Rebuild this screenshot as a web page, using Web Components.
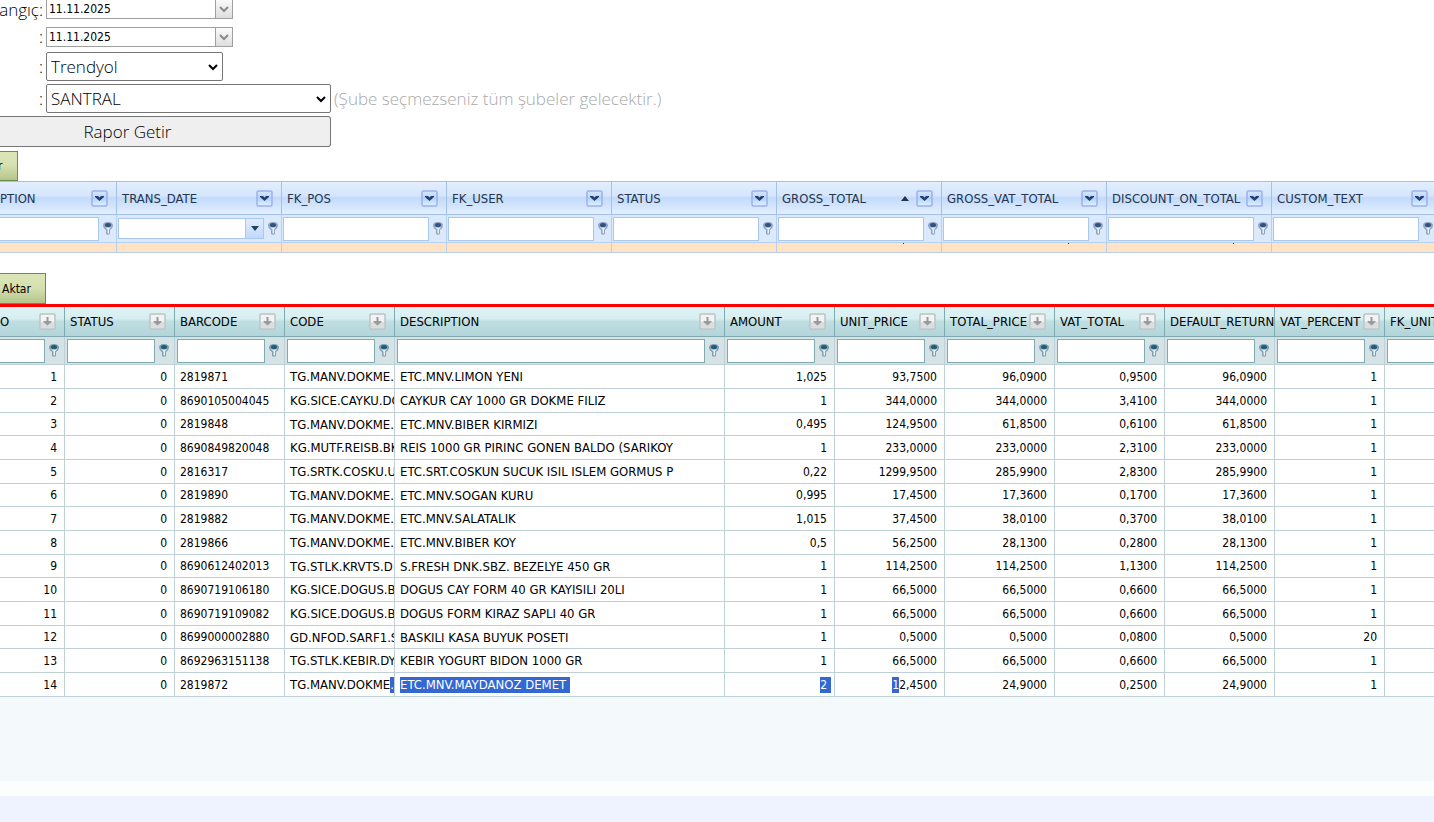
<!DOCTYPE html>
<html lang="tr">
<head>
<meta charset="utf-8">
<title>Rapor</title>
<style>
  body {
    margin: 0;
    background: #fff;
    color: #000;
    font-family: "DejaVu Sans Condensed", "DejaVu Sans", sans-serif;
    font-size: 12px;
    overflow: hidden;
  }
</style>
</head>
<body>
<report-page>
  <report-form slot="form">
    <form-row label="angıç:"><date-box name="Başlangıç" value="11.11.2025" cut></date-box></form-row>
    <form-row label=":"><date-box name="Bitiş" value="11.11.2025"></date-box></form-row>
    <form-row label=":" tall><pick-list name="Kaynak" value="Trendyol"></pick-list></form-row>
    <form-row label=":" tall><pick-list name="Şube" value="SANTRAL" wide></pick-list><span class="hint">(Şube seçmezseniz tüm şubeler gelecektir.)</span></form-row>
  </report-form>
  <export-button slot="export" cut>r</export-button>
  <data-grid slot="orders" id="orders"></data-grid>
  <export-button slot="export-lines">Aktar</export-button>
  <data-grid slot="lines" id="lines" theme="aqua"></data-grid>
</report-page>

<script>
const SVG_CHEVRON = `<svg viewBox="0 0 10 8" width="10" height="8"><path d="M1 2L5 6 9 2" fill="none" stroke="currentColor" stroke-width="2"/></svg>`;
const SVG_KEY = `<svg viewBox="0 0 10 13" width="10" height="13"><path d="M0 3.500Q0 0 5 0T10 3.500Q10 6 7 8V12Q5 13.500 3 12V8Q0 6 0 3.500z" fill="var(--pin)"/><path d="M1.500 4.500Q5 7 8.500 4.500L6 7.500V11.500H4.500V7.500z" fill="#eaf2f7"/><ellipse cx="5" cy="3" rx="3" ry="2" fill="var(--pin-dark)"/></svg>`;
const SVG_MENU_BLUE = `<svg viewBox="0 0 17 17" width="17" height="17"><defs><linearGradient id="b" x2="0" y2="1"><stop offset="0" stop-color="#d8e8fd"/><stop offset=".5" stop-color="#b4d2fb"/><stop offset="1" stop-color="#e0f3ff"/></linearGradient></defs><rect x="1" y="1" width="15" height="15" rx="1.500" fill="url(#b)" stroke="#9db0ea" stroke-width="1.500"/><path d="M4 6H7L8.500 7.500 10 6H13V7L8.500 11 4 7z" fill="#23406e"/></svg>`;
const SVG_MENU_GREY = `<svg viewBox="0 0 17 17" width="17" height="17"><rect x="1" y="1" width="15" height="15" rx="1" fill="#f3f3f3" stroke="#bcc3c5" stroke-width="1.500"/><path d="M2 9H15V15H2z" fill="#dcdddd"/><path d="M7.500 4H9.500V8H12.500V9L8.500 12.500 4.500 9V8H7.500z" fill="#989b9c"/></svg>`;
const SVG_SORT = `<svg viewBox="0 0 8 5" width="8" height="5"><path d="M0 5L4 0 8 5z" fill="#23344f"/></svg>`;
const SVG_DOWN = `<svg viewBox="0 0 8 5" width="8" height="5"><path d="M0 0H8L4 5z" fill="#23405f"/></svg>`;

class BaseElement extends HTMLElement {
  render(html) {
    if (!this.shadowRoot) this.attachShadow({ mode: 'open' });
    this.shadowRoot.innerHTML = html;
  }
}

class ReportPage extends BaseElement {
  connectedCallback() {
    this.render(`
<style>
  :host { display: flex; flex-direction: column; min-height: 100vh; }
  .orders { padding-bottom: 20px; }
  .lines {
    border-top: 3px solid #f00;
    background: #f4f9fc;
    padding-bottom: 84px;
  }
  .foot { flex: 1; border-top: 15px solid #fcfdfd; background: #eef3ff; }
</style>
<slot name="form"></slot>
<slot name="export"></slot>
<div class="orders"><slot name="orders"></slot></div>
<slot name="export-lines"></slot>
<div class="lines"><slot name="lines"></slot></div>
<div class="foot"></div>`);
  }
}

class ReportForm extends BaseElement {
  connectedCallback() {
    this.render(`
<style>
  :host { display: block; padding-bottom: 4px; font-family: "Open Sans", "Noto Sans", sans-serif; font-size: 17px; font-weight: 300; }
  button {
    display: block;
    box-sizing: border-box;
    width: 331px;
    height: 31px;
    padding: 0 75px 0 0;
    border: 1px solid #767676;
    border-left: 0;
    border-radius: 0 3px 3px 0;
    background: #efefef;
    color: #000;
    font: inherit;
  }
</style>
<slot></slot>
<button type="button">Rapor Getir</button>`);
  }
}

class FormRow extends BaseElement {
  connectedCallback() {
    this.render(`
<style>
  :host { display: flex; align-items: center; height: 20px; padding-bottom: 5px; white-space: nowrap; }
  :host(:first-child) { height: 19px; padding-bottom: 8px; }
  :host([tall]) { height: 29px; padding-bottom: 3px; }
  .label { width: 43px; margin-right: 3px; display: flex; justify-content: flex-end; line-height: 20px; }
  ::slotted(.hint) { margin-left: 3px; color: #a9a9a9; }
</style>
<span class="label">${this.getAttribute('label')}</span><slot></slot>`);
  }
}

class DateBox extends BaseElement {
  connectedCallback() {
    this.render(`
<style>
  :host { display: flex; box-sizing: border-box; width: 187px; height: 20px; border: 1px solid #9f9f9f; background: #fff; }
  :host([cut]) { border-top: 0; height: 19px; }
  input {
    flex: 1; min-width: 0; padding: 0 2px; border: 0; outline: 0;
    font-family: "DejaVu Sans Condensed", "DejaVu Sans", sans-serif;
    font-size: 12px;
  }
  button {
    width: 17px; padding: 0; border: 0;
    border-left: 1px solid #9f9f9f;
    background: linear-gradient(to bottom, #fafafa, #dedede);
    color: #8a8a8a; line-height: 0;
  }
</style>
<input type="text" aria-label="${this.getAttribute('name')}" value="${this.getAttribute('value')}">
<button type="button" aria-label="Takvim">${SVG_CHEVRON}</button>`);
  }
}

class PickList extends BaseElement {
  connectedCallback() {
    this.render(`
<style>
  :host { display: grid; align-items: center; width: 177px; height: 29px; }
  :host([wide]) { width: 285px; }
  select, span { grid-area: 1 / 1; }
  select {
    appearance: none; box-sizing: border-box; width: 100%; height: 29px;
    padding: 0 4px; border: 1px solid #767676; border-radius: 2px;
    background: #fff; color: #000; font: inherit;
  }
  span { justify-self: end; margin-right: 5px; line-height: 0; pointer-events: none; }
</style>
<select aria-label="${this.getAttribute('name')}"><option>${this.getAttribute('value')}</option></select>
<span>${SVG_CHEVRON}</span>`);
  }
}

class ExportButton extends BaseElement {
  connectedCallback() {
    this.render(`
<style>
  :host { display: block; }
  button {
    display: block; box-sizing: border-box; width: 46px; height: 31px;
    padding: 0; overflow: hidden;
    border: 1px solid #6d8a4f; border-left: 0;
    background: linear-gradient(to bottom, #dbe7b8, #d3dfae 50%, #b5c48b);
    color: #000; font: inherit; text-align: left; text-indent: 2px;
  }
  :host([cut]) button { width: 18px; height: 30px; text-indent: -2px; }
</style>
<button type="button"><slot></slot></button>`);
  }
}

class DataGrid extends BaseElement {
  set config(cfg) {
    const width = cfg.columns.reduce((sum, c) => sum + c.width, 0);
    const cols = cfg.columns.map(c => `<col style="width:${c.width}px">`).join('');
    const menu = this.getAttribute('theme') === 'aqua' ? SVG_MENU_GREY : SVG_MENU_BLUE;
    const heads = cfg.columns.map(c => `
      <th scope="col"><div class="head">
        <span class="title">${c.title}</span>
        ${c.sorted ? `<span class="sort">${SVG_SORT}</span>` : ''}
        ${c.noMenu ? '' : `<button type="button" aria-label="Filtre">${menu}</button><i></i>`}
      </div></th>`).join('');
    const filters = cfg.columns.map(c => `
      <td><div class="filter">
        <div class="box${c.combo ? ' combo' : ''}"><input type="text" aria-label="${c.title}">${c.combo ? `<button type="button" aria-label="Seç">${SVG_DOWN}</button>` : ''}</div>
        <span class="key">${SVG_KEY}</span>
      </div></td>`).join('');
    const rows = cfg.rows.map(r => `<tr>${r.map((v, i) =>
      `<td class="${cfg.columns[i].align || ''} ${cfg.columns[i].speck ? 'speck' : ''}">${v}</td>`).join('')}</tr>`).join('');

    this.render(`
<style>
  :host {
    display: block; overflow: hidden;
    --line: #a3c0e8; --cell-line: #b8d0ee; --text: #23344f;
    --head: linear-gradient(to bottom, #e3eefe, #d6e6fc 42%, #c2dafa 50%, #d3e5fd 75%, #e2efff);
    --filter: #dbe9fd; --box: #a9c7f0;
    --pin: #8da3c0; --pin-dark: #31517f;
    --head-height: 34px; --filter-height: 28px; --pad: 1px;
  }
  :host([theme="aqua"]) {
    --line: #7fabb0; --cell-line: #bfd1d7; --text: #000;
    --head: linear-gradient(to bottom, #dff3f4, #d7eef0 40%, #bfdee1 50%, #b2d5d9);
    --filter: #d5e3e7; --box: #7fabb0;
    --pin: #7d9eb0; --pin-dark: #235a78;
    --head-height: 30px; --pad: 2px;
  }
  table { border-collapse: separate; border-spacing: 0; table-layout: fixed; }
  th, td {
    box-sizing: border-box; padding: 0; overflow: hidden; white-space: nowrap;
    border-right: 1px solid var(--cell-line); border-bottom: 1px solid var(--cell-line);
  }
  th {
    height: var(--head-height); background: var(--head); color: var(--text);
    border-color: var(--line); font-size: 13px; font-weight: normal; text-align: left;
  }
  :host(:not([theme])) th { border-top: 1px solid var(--line); }
  .head { display: flex; align-items: center; padding-left: 5px; }
  th:first-child .head { padding-left: 0; }
  .title { flex: none; margin-right: auto; }
  .sort { margin-right: 5px; line-height: 0; }
  button { flex: none; padding: 0; border: 0; background: none; line-height: 0; }
  .head button { margin-left: 2px; }
  i { flex: 0 1 8px; }
  .filters td { height: var(--filter-height); background: var(--filter); border-color: var(--cell-line); }
  .filter { display: flex; align-items: center; gap: 4px; padding: 0 5px 0 var(--pad); }
  :host(:not([theme])) .filter { padding-right: 3px; }
  .box {
    flex: 1; min-width: 0; display: flex; box-sizing: border-box; height: 24px;
    border: 1px solid var(--box); background: #fff;
  }
  .box.combo { height: 21px; }
  td:first-child .box { border-left: 0; }
  td:first-child .filter { padding-left: 0; }
  .box input { flex: 1; min-width: 0; padding: 0 2px; border: 0; outline: 0; background: none; font: inherit; }
  .combo button { width: 18px; border-left: 1px solid var(--box); background: linear-gradient(to bottom, #e0edfe, #c0d9fa); }
  .key { line-height: 0; }
  tbody td { height: 24px; padding: 0 6px 0 5px; background: #fff; }
  tbody tr:nth-child(3n) td { height: 23px; }
  tbody .num { text-align: right; padding-right: 7px; }
  tbody .text { font-size: 13px; padding-right: 0; }
  :host(:not([theme])) tbody td { height: 10px; background: #ffe3c4; }
  :host(:not([theme])) tbody .speck { background: linear-gradient(#333, #333) 126px 0 / 1px 1px no-repeat #ffe3c4; }
  mark { display: inline-block; line-height: 16px; background: #3367d1; color: #fff; }
  mark.tail { padding-right: 4px; }
  .num mark.tail { margin-right: -4px; }
</style>
<table style="width:${width}px">
  <colgroup>${cols}</colgroup>
  <thead><tr>${heads}</tr><tr class="filters">${filters}</tr></thead>
  <tbody>${rows}</tbody>
</table>`);
  }
}

customElements.define('report-page', ReportPage);
customElements.define('report-form', ReportForm);
customElements.define('form-row', FormRow);
customElements.define('date-box', DateBox);
customElements.define('pick-list', PickList);
customElements.define('export-button', ExportButton);
customElements.define('data-grid', DataGrid);

document.getElementById('orders').config = {
  columns: [
    { title: 'PTION', width: 117 },
    { title: 'TRANS_DATE', width: 165, combo: true },
    { title: 'FK_POS', width: 165 },
    { title: 'FK_USER', width: 165 },
    { title: 'STATUS', width: 165 },
    { title: 'GROSS_TOTAL', width: 165, sorted: true, speck: true },
    { title: 'GROSS_VAT_TOTAL', width: 165, speck: true },
    { title: 'DISCOUNT_ON_TOTAL', width: 165, speck: true },
    { title: 'CUSTOM_TEXT', width: 165 },
  ],
  rows: [['', '', '', '', '', '', '', '', '']],
};

document.getElementById('lines').config = {
  columns: [
    { title: 'O', width: 65, align: 'num' },
    { title: 'STATUS', width: 110, align: 'num' },
    { title: 'BARCODE', width: 110 },
    { title: 'CODE', width: 110, align: 'text' },
    { title: 'DESCRIPTION', width: 330, align: 'text' },
    { title: 'AMOUNT', width: 110, align: 'num' },
    { title: 'UNIT_PRICE', width: 110, align: 'num' },
    { title: 'TOTAL_PRICE', width: 110, align: 'num' },
    { title: 'VAT_TOTAL', width: 110, align: 'num' },
    { title: 'DEFAULT_RETURN', width: 110, align: 'num', noMenu: true },
    { title: 'VAT_PERCENT', width: 110, align: 'num' },
    { title: 'FK_UNIT', width: 110, noMenu: true },
  ],
  rows: [
    ['1', '0', '2819871', 'TG.MANV.DOKME.S', 'ETC.MNV.LIMON YENI', '1,025', '93,7500', '96,0900', '0,9500', '96,0900', '1', ''],
    ['2', '0', '8690105004045', 'KG.SICE.CAYKU.DO', 'CAYKUR CAY 1000 GR DOKME FILIZ', '1', '344,0000', '344,0000', '3,4100', '344,0000', '1', ''],
    ['3', '0', '2819848', 'TG.MANV.DOKME.S', 'ETC.MNV.BIBER KIRMIZI', '0,495', '124,9500', '61,8500', '0,6100', '61,8500', '1', ''],
    ['4', '0', '8690849820048', 'KG.MUTF.REISB.BK', 'REIS 1000 GR PIRINC GONEN BALDO (SARIKOY', '1', '233,0000', '233,0000', '2,3100', '233,0000', '1', ''],
    ['5', '0', '2816317', 'TG.SRTK.COSKU.U', 'ETC.SRT.COSKUN SUCUK ISIL ISLEM GORMUS P', '0,22', '1299,9500', '285,9900', '2,8300', '285,9900', '1', ''],
    ['6', '0', '2819890', 'TG.MANV.DOKME.S', 'ETC.MNV.SOGAN KURU', '0,995', '17,4500', '17,3600', '0,1700', '17,3600', '1', ''],
    ['7', '0', '2819882', 'TG.MANV.DOKME.S', 'ETC.MNV.SALATALIK', '1,015', '37,4500', '38,0100', '0,3700', '38,0100', '1', ''],
    ['8', '0', '2819866', 'TG.MANV.DOKME.S', 'ETC.MNV.BIBER KOY', '0,5', '56,2500', '28,1300', '0,2800', '28,1300', '1', ''],
    ['9', '0', '8690612402013', 'TG.STLK.KRVTS.D', 'S.FRESH DNK.SBZ. BEZELYE 450 GR', '1', '114,2500', '114,2500', '1,1300', '114,2500', '1', ''],
    ['10', '0', '8690719106180', 'KG.SICE.DOGUS.BO', 'DOGUS CAY FORM 40 GR KAYISILI 20LI', '1', '66,5000', '66,5000', '0,6600', '66,5000', '1', ''],
    ['11', '0', '8690719109082', 'KG.SICE.DOGUS.BO', 'DOGUS FORM KIRAZ SAPLI 40 GR', '1', '66,5000', '66,5000', '0,6600', '66,5000', '1', ''],
    ['12', '0', '8699000002880', 'GD.NFOD.SARF1.S', 'BASKILI KASA BUYUK POSETI', '1', '0,5000', '0,5000', '0,0800', '0,5000', '20', ''],
    ['13', '0', '8692963151138', 'TG.STLK.KEBIR.DY', 'KEBIR YOGURT BIDON 1000 GR', '1', '66,5000', '66,5000', '0,6600', '66,5000', '1', ''],
    ['14', '0', '2819872', 'TG.MANV.DOKME<mark>.S</mark>', '<mark class="tail">ETC.MNV.MAYDANOZ DEMET</mark>', '<mark class="tail">2</mark>', '<mark>1</mark>2,4500', '24,9000', '0,2500', '24,9000', '1', ''],
  ],
};
</script>
</body>
</html>
